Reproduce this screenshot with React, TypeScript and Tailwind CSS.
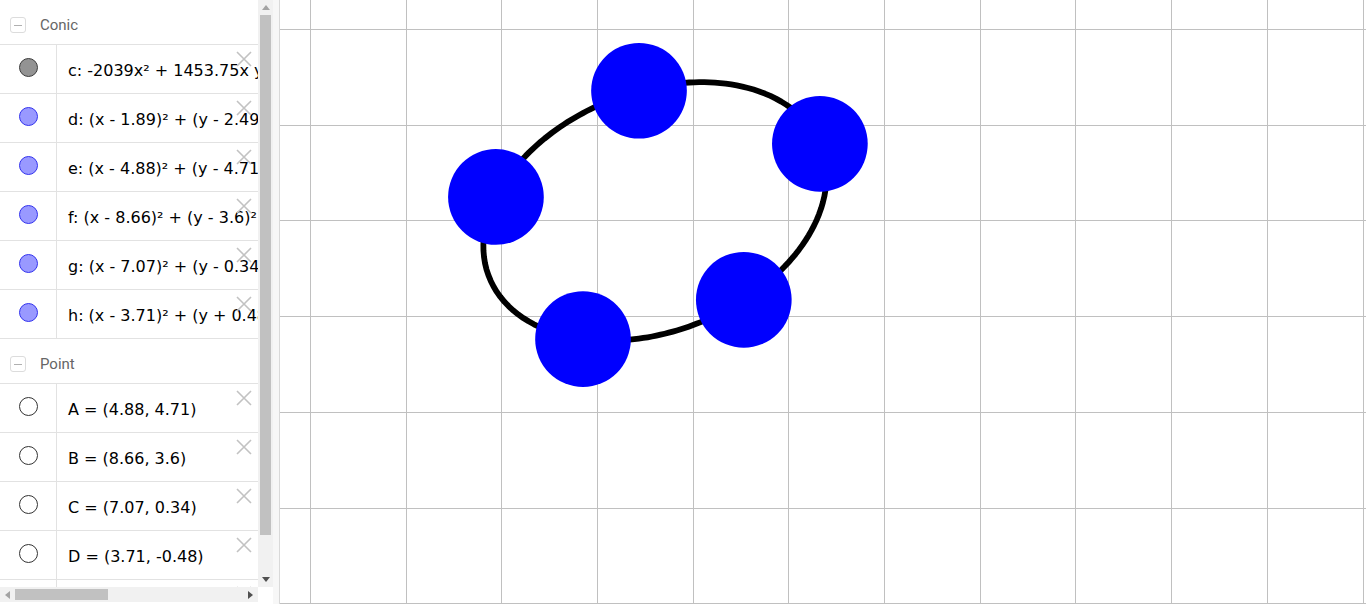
import React from "react";

type Row = { label: string; marker: "gray" | "blue" | "point" };

const conicRows: Row[] = [
  { label: "c: -2039x² + 1453.75x y - 1630.66y² + 14716.93x + 5007.84y = 27153.56", marker: "gray" },
  { label: "d: (x - 1.89)² + (y - 2.49)² = 1", marker: "blue" },
  { label: "e: (x - 4.88)² + (y - 4.71)² = 1", marker: "blue" },
  { label: "f: (x - 8.66)² + (y - 3.6)² = 1", marker: "blue" },
  { label: "g: (x - 7.07)² + (y - 0.34)² = 1", marker: "blue" },
  { label: "h: (x - 3.71)² + (y + 0.48)² = 1", marker: "blue" },
];

const pointRows: Row[] = [
  { label: "A = (4.88, 4.71)", marker: "point" },
  { label: "B = (8.66, 3.6)", marker: "point" },
  { label: "C = (7.07, 0.34)", marker: "point" },
  { label: "D = (3.71, -0.48)", marker: "point" },
  { label: "E = (1.89, 2.49)", marker: "point" },
];

const pts: [number, number][] = [
  [1.89, 2.49],
  [4.88, 4.71],
  [8.66, 3.6],
  [7.07, 0.34],
  [3.71, -0.48],
];

// graphics view mapping (local to the canvas, which starts at x=280)
const SCALE = 47.85;
const OX = 125.5;
const OY = 316.1;
const px = (x: number) => OX + x * SCALE;
const py = (y: number) => OY - y * SCALE;

function solve(m: number[][]): number[] {
  const n = m.length;
  const a = m.map((r) => r.slice());
  for (let i = 0; i < n; i++) {
    let p = i;
    for (let k = i + 1; k < n; k++) if (Math.abs(a[k][i]) > Math.abs(a[p][i])) p = k;
    [a[i], a[p]] = [a[p], a[i]];
    for (let k = 0; k < n; k++) {
      if (k === i) continue;
      const f = a[k][i] / a[i][i];
      for (let j = i; j <= n; j++) a[k][j] -= f * a[i][j];
    }
  }
  return a.map((r, i) => r[n] / r[i]);
}

function conicPath(): string {
  const [A, B, C, D, E] = solve(pts.map(([x, y]) => [x * x, x * y, y * y, x, y, -1]));
  const F = 1;
  const cx = pts.reduce((s, p) => s + p[0], 0) / pts.length;
  const cy = pts.reduce((s, p) => s + p[1], 0) / pts.length;
  const qc = A * cx * cx + B * cx * cy + C * cy * cy + D * cx + E * cy + F;
  const out: string[] = [];
  for (let t = 0; t < 360; t += 2) {
    const co = Math.cos((t * Math.PI) / 180);
    const si = Math.sin((t * Math.PI) / 180);
    const qa = A * co * co + B * co * si + C * si * si;
    const qb = 2 * A * cx * co + B * (cx * si + cy * co) + 2 * C * cy * si + D * co + E * si;
    const disc = Math.sqrt(Math.max(0, qb * qb - 4 * qa * qc));
    const r = Math.max((-qb + disc) / (2 * qa), (-qb - disc) / (2 * qa));
    const x = cx + r * co;
    const y = cy + r * si;
    out.push(`${out.length ? "L" : "M"}${px(x).toFixed(2)} ${py(y).toFixed(2)}`);
  }
  return out.join(" ") + " Z";
}

const vLines = Array.from({ length: 12 }, (_, k) => Math.round(OX + (k - 1) * 95.7) + 0.5);
const hLines = Array.from({ length: 7 }, (_, k) => Math.round(OY + (k - 3) * 95.7) + 0.5);

function Marker({ kind }: { kind: Row["marker"] }) {
  if (kind === "gray") return <div className="w-[19px] h-[19px] rounded-full bg-[#939393] border border-[#3c3c3c]" />;
  if (kind === "blue") return <div className="w-[19px] h-[19px] rounded-full bg-[#9999ff] border border-[#3333ee]" />;
  return <div className="w-[19px] h-[19px] rounded-full bg-white border border-[#333333]" />;
}

function CloseIcon() {
  return (
    <svg width="16" height="16" viewBox="0 0 16 16" className="absolute left-[236px] top-[6px]">
      <path d="M1 1 L15 15 M15 1 L1 15" stroke="#c2c2c2" strokeWidth="1.6" fill="none" />
    </svg>
  );
}

function Header({ title }: { title: string }) {
  return (
    <div className="h-[45px] shrink-0 border-b border-[#e2e2e2] flex items-center pt-[6px]">
      <div className="ml-[10px] w-[16px] h-[16px] rounded-[3px] border border-[#dcdcdc] flex items-center justify-center">
        <div className="w-[8px] h-[1px] bg-[#b0b0b0]" />
      </div>
      <span className="ml-[14px] text-[15px] text-[#666666] font-['Roboto',sans-serif]">{title}</span>
    </div>
  );
}

function ItemRow({ row }: { row: Row }) {
  return (
    <div className="relative h-[49px] shrink-0 flex border-b border-[#e2e2e2]">
      <div className="w-[57px] shrink-0 border-r border-[#e2e2e2] flex justify-center pt-[13px]">
        <Marker kind={row.marker} />
      </div>
      <div className="flex-1 min-w-0 pl-[11px] pt-[16px] whitespace-nowrap overflow-hidden text-[16px] leading-[20px] text-black font-['DejaVu_Sans',sans-serif]">
        {row.label}
      </div>
      <CloseIcon />
    </div>
  );
}

function Tri({ dir, color }: { dir: "up" | "down" | "left" | "right"; color: string }) {
  const d = {
    up: "M0 5 L4 0 L8 5 Z",
    down: "M0 0 L8 0 L4 5 Z",
    left: "M5 0 L5 8 L0 4 Z",
    right: "M0 0 L0 8 L5 4 Z",
  }[dir];
  const vertical = dir === "up" || dir === "down";
  return (
    <svg width={vertical ? 8 : 5} height={vertical ? 5 : 8} viewBox={vertical ? "0 0 8 5" : "0 0 5 8"}>
      <path d={d} fill={color} />
    </svg>
  );
}

export default function App() {
  const path = conicPath();
  return (
    <div className="flex w-[1366px] h-[604px] overflow-hidden bg-white">
      <div className="w-[273px] shrink-0 flex flex-col">
        <div className="h-[587px] flex">
          <div className="w-[258px] flex flex-col overflow-hidden">
            <Header title="Conic" />
            {conicRows.map((r) => (
              <ItemRow key={r.label} row={r} />
            ))}
            <Header title="Point" />
            {pointRows.map((r) => (
              <ItemRow key={r.label} row={r} />
            ))}
          </div>
          <div className="w-[15px] bg-[#f1f1f1] flex flex-col">
            <div className="h-[15px] flex items-center justify-center">
              <Tri dir="up" color="#a3a3a3" />
            </div>
            <div className="flex-1 px-[2px]">
              <div className="h-[520px] bg-[#c1c1c1]" />
            </div>
            <div className="h-[15px] flex items-center justify-center">
              <Tri dir="down" color="#505050" />
            </div>
          </div>
        </div>
        <div className="flex">
          <div className="w-[258px] h-[15px] bg-[#f1f1f1] flex items-center">
            <div className="w-[15px] h-full flex items-center justify-center">
              <Tri dir="left" color="#a3a3a3" />
            </div>
            <div className="flex-1 h-full py-[2px]">
              <div className="w-[93px] h-full bg-[#c1c1c1]" />
            </div>
            <div className="w-[15px] h-full flex items-center justify-center">
              <Tri dir="right" color="#505050" />
            </div>
          </div>
        </div>
      </div>
      <div className="w-[6px] shrink-0 bg-[#f7f7f7] border-r border-[#d9d9d9] box-content" />
      <div className="flex-1 min-w-0">
        <svg width="1086" height="604" viewBox="0 0 1086 604" className="block">
          {vLines.map((x) => (
            <line key={"v" + x} x1={x} y1={0} x2={x} y2={604} stroke="#c0c0c0" strokeWidth="1" />
          ))}
          {hLines.map((y) => (
            <line key={"h" + y} x1={0} y1={y} x2={1086} y2={y} stroke="#c0c0c0" strokeWidth="1" />
          ))}
          <path d={path} fill="none" stroke="#000" strokeWidth="5.8" strokeLinejoin="round" />
          {pts.map(([x, y]) => (
            <circle key={x} cx={px(x)} cy={py(y)} r={SCALE} fill="#0000ff" />
          ))}
        </svg>
      </div>
    </div>
  );
}
